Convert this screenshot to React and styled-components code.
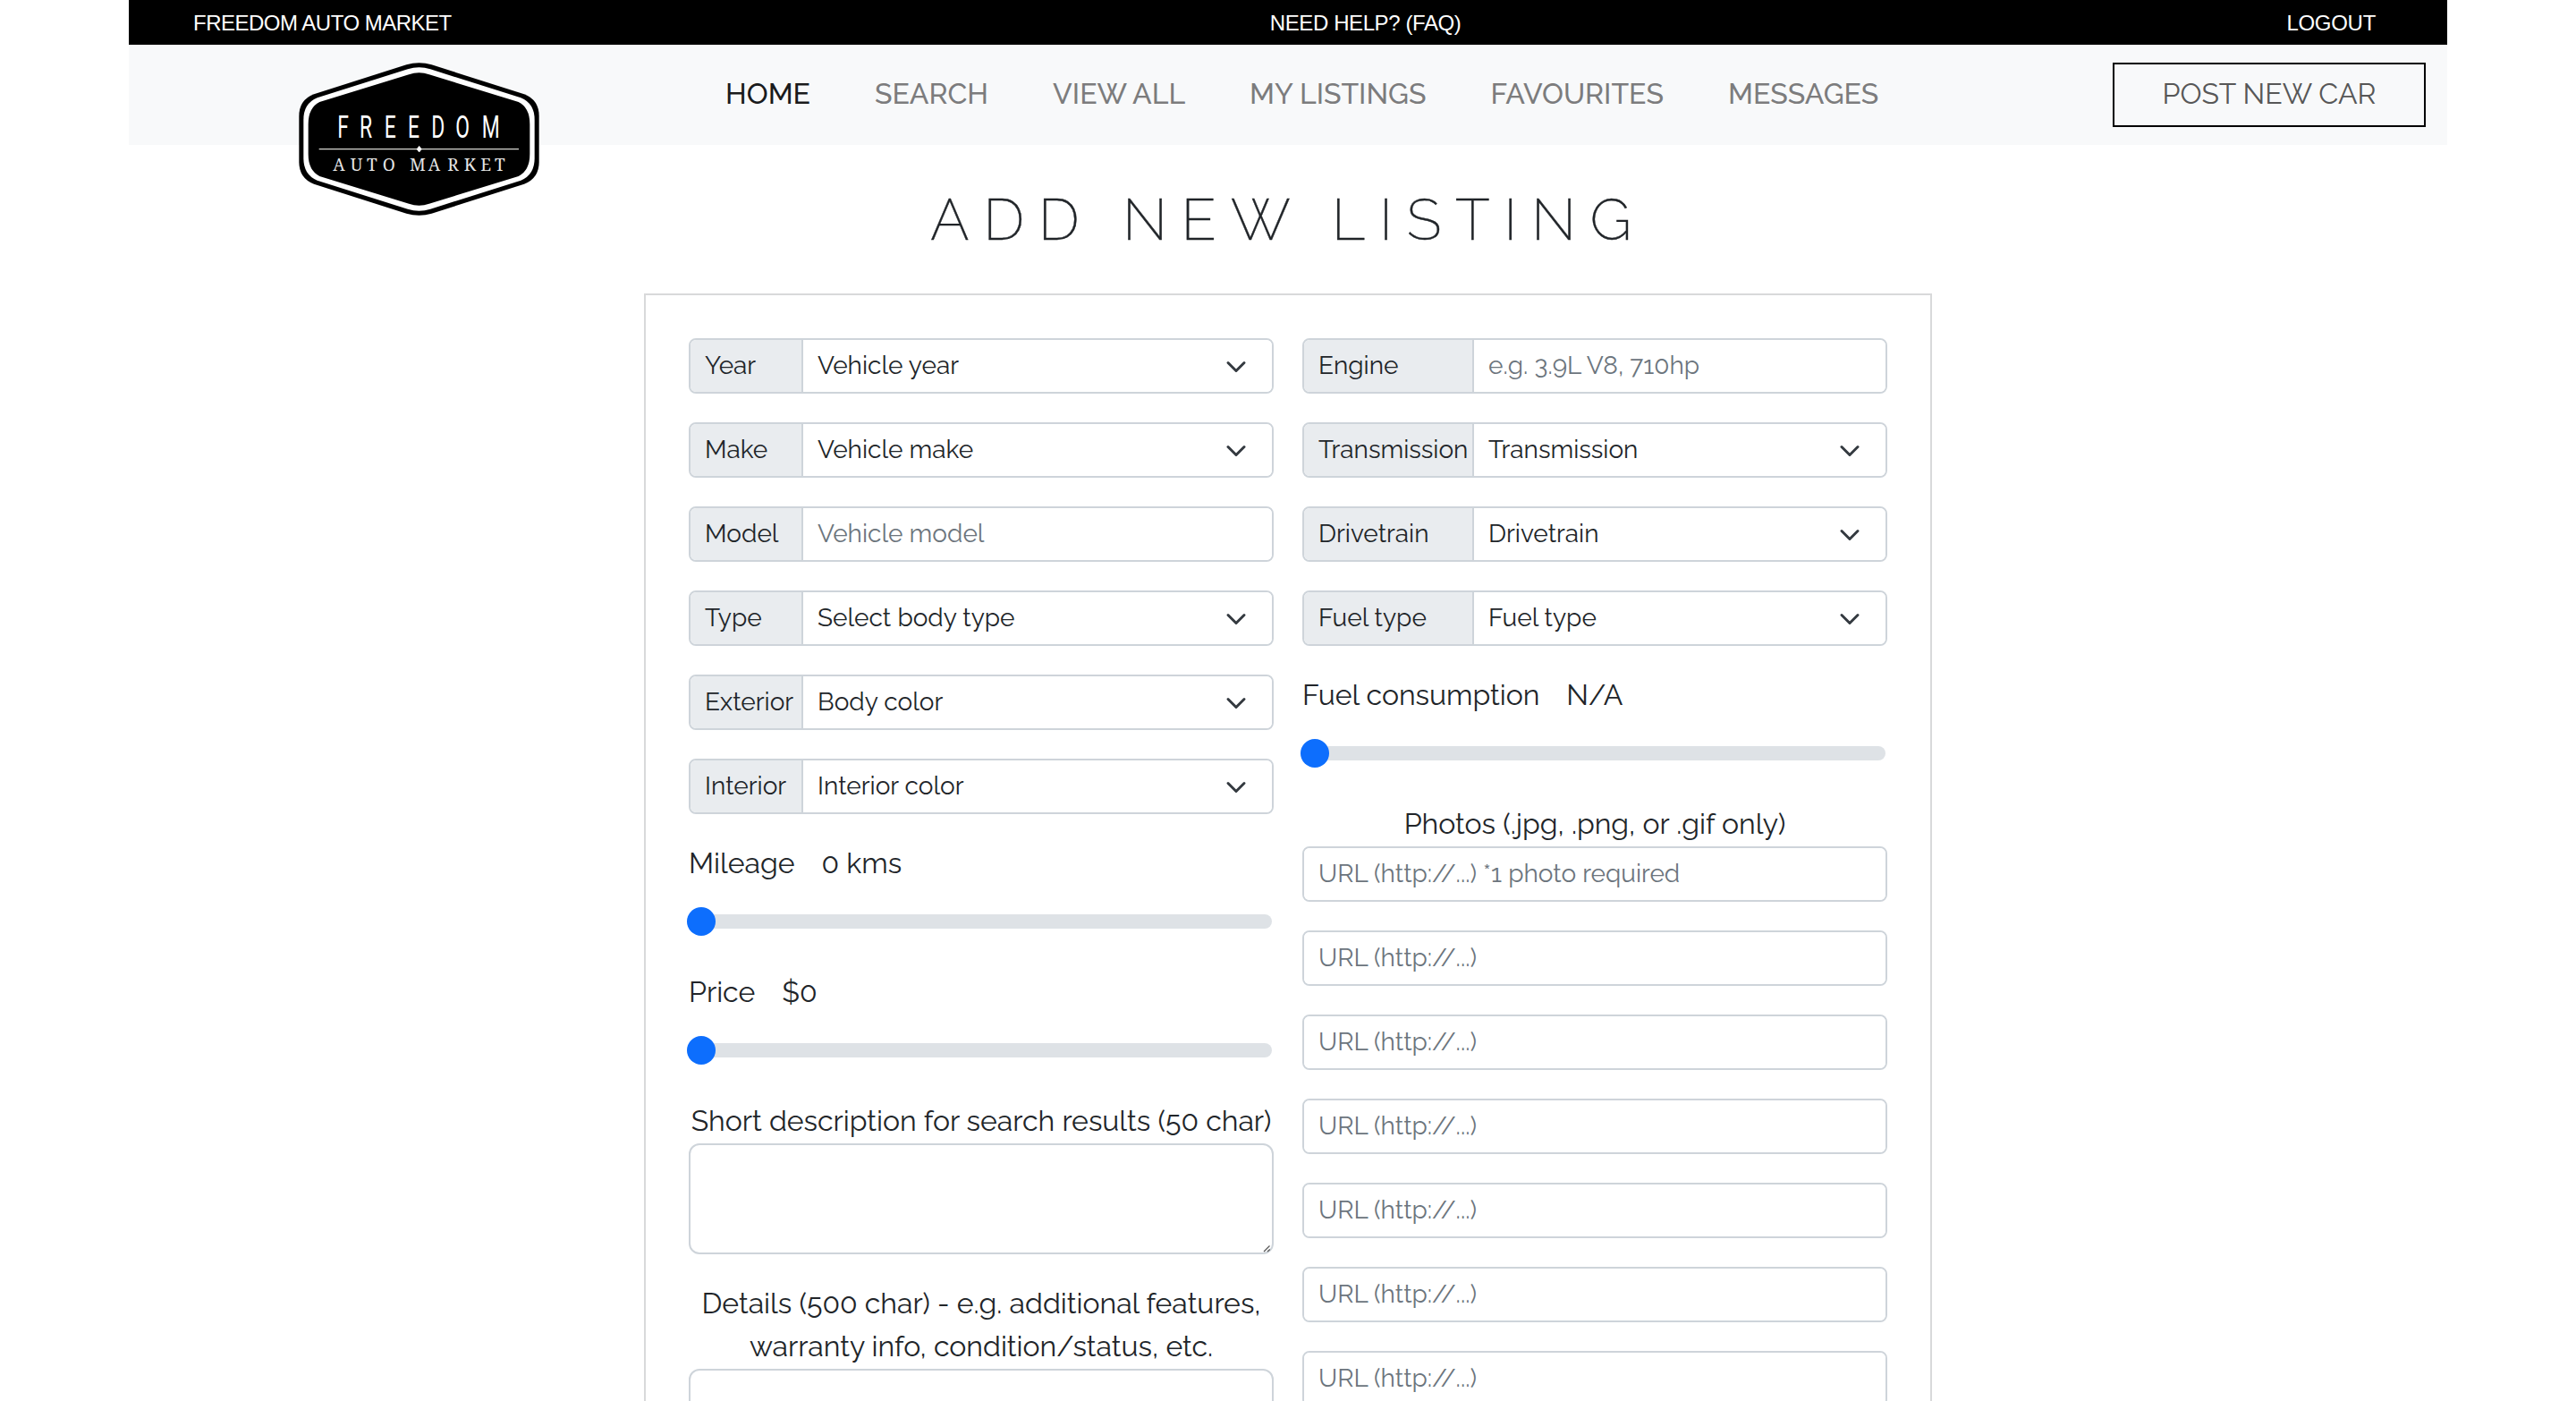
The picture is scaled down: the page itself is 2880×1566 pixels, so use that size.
import React from "react";
import styled, { createGlobalStyle } from "styled-components";

const GlobalStyle = createGlobalStyle`
  *, *::before, *::after { box-sizing: border-box; }
  html, body { margin: 0; height: 1566px; overflow: hidden; background: #fff; }
  body, input, select, textarea { font-family: Raleway, Lato, "Open Sans", sans-serif; }
  body { font-size: 32px; line-height: 48px; color: #212529; }
`;

const Page = styled.div`
  width: 2592px;
  height: 1566px;
  margin: 0 auto;
  overflow: hidden;
`;

const TopBar = styled.div`
  display: flex;
  justify-content: space-between;
  height: 50px;
  padding: 0 80px 0 72px;
  background: #000;
  color: #fff;
  font: 24px/52px "Liberation Sans", Arial, sans-serif;
`;

const TopLink = styled.a`
  letter-spacing: ${(p) => p.$spacing}px;
  margin-left: ${(p) => p.$shift || 0}px;
`;

const Nav = styled.nav`
  display: flex;
  align-items: flex-start;
  height: 112px;
  padding: 0 24px 0 186px;
  background: #f8f9fa;
`;

const Logo = styled.svg`
  flex: none;
  width: 280px;
  height: 184px;
  margin-top: 14px;
`;

const NavLinks = styled.div`
  display: flex;
  gap: 72px;
  margin: 31px 0 0 201px;
  font-weight: 500;
`;

const NavLink = styled.a`
  color: ${(p) => (p.$active ? "#1a1b1c" : "#7c7c7d")};
  white-space: nowrap;
`;

const PostButton = styled.a`
  width: 350px;
  height: 72px;
  margin: 20px 0 0 auto;
  border: 2px solid #000;
  color: #575757;
  line-height: 66px;
  text-align: center;
`;

const Title = styled.h1`
  margin: 0;
  height: 166px;
  padding-top: 45px;
  font-size: 64px;
  font-weight: 200;
  line-height: 77px;
  letter-spacing: 16px;
  text-align: center;
  -webkit-text-stroke: 0.4px #212529;
`;

const Panel = styled.form`
  display: grid;
  grid-template-columns: 654px 654px;
  gap: 32px;
  width: 1440px;
  height: 1400px;
  margin: 0 auto;
  padding: 48px;
  border: 2px solid #d8d9da;
`;

const Column = styled.div`
  display: flex;
  flex-direction: column;
`;

const Group = styled.div`
  display: flex;
  flex: none;
  height: 62px;
  margin-bottom: 32px;
  border: 2px solid #ced4da;
  border-radius: 8px;
  overflow: hidden;
  font-size: 28px;
  line-height: 42px;
`;

const Tag = styled.span`
  flex: none;
  width: ${(p) => p.$width}px;
  padding: 8px 0 0 16px;
  border-right: 2px solid #ced4da;
  background: #e9ecef;
  white-space: nowrap;
`;

const Input = styled.input`
  flex: 1;
  min-width: 0;
  padding: 8px 16px;
  border: 0;
  outline: 0;
  background: #fff;
  font-size: 28px;
  line-height: 42px;
  color: #212529;
  &::placeholder { color: #6c757d; opacity: 1; }
`;

const SelectBox = styled.div`
  display: flex;
  flex: 1;
  align-items: center;
  justify-content: space-between;
  padding: 0 24px 0 16px;
  background: #fff;
`;

const SelectText = styled.span`
  height: 42px;
`;

const Caret = styled.svg`
  width: 32px;
  height: 24px;
  margin-top: 1px;
`;

const Readout = styled.div`
  display: flex;
  gap: 30px;
  height: 48px;
  line-height: 46px;
`;

const Slider = styled.input`
  appearance: none;
  width: 654px;
  height: 48px;
  margin: 16px 0 32px -2px;
  padding: 0;
  background: transparent;
  &::-webkit-slider-runnable-track {
    height: 16px;
    border-radius: 16px;
    background: #dee2e6;
  }
  &::-webkit-slider-thumb {
    appearance: none;
    width: 32px;
    height: 32px;
    margin-top: -8px;
    border-radius: 50%;
    background: #0d6efd;
  }
`;

const Caption = styled.div`
  margin-top: -1px;
  padding-bottom: 1px;
  text-align: center;
`;

const AreaWrap = styled.div`
  position: relative;
  height: 124px;
  margin-bottom: 32px;
`;

const Area = styled.textarea`
  display: block;
  width: 100%;
  height: 124px;
  border: 2px solid #ced4da;
  border-radius: 12px;
  background: #fff;
  resize: none;
`;

const Grip = styled.svg`
  position: absolute;
  right: 3px;
  bottom: 2px;
  width: 9px;
  height: 9px;
`;

const hexagon = (x, y, shoulder, r, t) => {
  const c = 415.5;
  const R = 2 * c - x;
  const cy = 274.5;
  const m = (v) => 2 * cy - v;
  return `M${c - t} ${y + 6}Q${c} ${y - 6} ${c + t} ${y + 6}L${R - r} ${shoulder}Q${R} ${shoulder + 19} ${R} ${shoulder + 74}V${m(shoulder + 74)}Q${R} ${m(shoulder + 19)} ${R - r} ${m(shoulder)}L${c + t} ${m(y + 6)}Q${c} ${m(y - 6)} ${c - t} ${m(y + 6)}L${x + r} ${m(shoulder)}Q${x} ${m(shoulder + 19)} ${x} ${m(shoulder + 74)}V${shoulder + 74}Q${x} ${shoulder + 19} ${x + r} ${shoulder}Z`;
};

const freedomX = [148, 222, 305, 384, 463, 544, 632].map((v) => (v - 6) / 0.66).join(" ");

const BrandLogo = () => (
  <Logo viewBox="0 0 840 552">
    <path d={hexagon(13, 19, 124, 50, 42)} fill="#000" />
    <path d={hexagon(28, 34, 136, 46, 38)} fill="#fff" />
    <path d={hexagon(44, 52, 150, 38, 34)} fill="#000" />
    <text x={freedomX} y="271" transform="scale(0.66 1)" fill="#fff" fontFamily="Roboto, sans-serif" fontSize="104">
      FREEDOM
    </text>
    <path d="M80 308H750" stroke="#d8d8d2" strokeWidth="4" />
    <path d="M416 298L424 308L416 318L408 308Z" fill="#fff" stroke="#fff" strokeWidth="2" />
    <text x="127 185 240 293 350 384 446 511 566 622 669" y="382" fill="#e6e6e6" fontFamily="'Noto Serif', 'DejaVu Serif Condensed', 'DejaVu Serif', serif" fontSize="57">
      AUTO MARKET
    </text>
  </Logo>
);

const SelectField = ({ label, width, value }) => (
  <Group>
    <Tag $width={width}>{label}</Tag>
    <SelectBox>
      <SelectText>{value}</SelectText>
      <Caret viewBox="0 0 16 16">
        <path d="m2 5 6 6 6-6" fill="none" stroke="#343a40" strokeWidth="2" strokeLinecap="round" strokeLinejoin="round" />
      </Caret>
    </SelectBox>
  </Group>
);

const InputField = ({ label, width, placeholder }) => (
  <Group>
    {label && <Tag $width={width}>{label}</Tag>}
    <Input placeholder={placeholder} />
  </Group>
);

const RangeField = ({ label, value }) => (
  <>
    <Readout>
      <span>{label}</span>
      <span>{value}</span>
    </Readout>
    <Slider type="range" min="0" max="100" defaultValue="0" />
  </>
);

const AreaField = () => (
  <AreaWrap>
    <Area />
    <Grip viewBox="0 0 9 9">
      <path d="M1 8L7.5 1.5M5 8L7.8 5.5" stroke="#555" strokeWidth="1.2" />
    </Grip>
  </AreaWrap>
);

const links = ["HOME", "SEARCH", "VIEW ALL", "MY LISTINGS", "FAVOURITES", "MESSAGES"];

export default function App() {
  return (
    <Page>
      <GlobalStyle />
      <TopBar>
        <TopLink $spacing={-0.5}>FREEDOM AUTO MARKET</TopLink>
        <TopLink $spacing={-0.4} $shift={-8}>NEED HELP? (FAQ)</TopLink>
        <TopLink $spacing={-0.3}>LOGOUT</TopLink>
      </TopBar>
      <Nav>
        <BrandLogo />
        <NavLinks>
          {links.map((l, i) => (
            <NavLink key={l} $active={i === 0}>{l}</NavLink>
          ))}
        </NavLinks>
        <PostButton>POST NEW CAR</PostButton>
      </Nav>
      <Title>ADD NEW LISTING</Title>
      <Panel>
        <Column>
          <SelectField label="Year" width={126} value="Vehicle year" />
          <SelectField label="Make" width={126} value="Vehicle make" />
          <InputField label="Model" width={126} placeholder="Vehicle model" />
          <SelectField label="Type" width={126} value="Select body type" />
          <SelectField label="Exterior" width={126} value="Body color" />
          <SelectField label="Interior" width={126} value="Interior color" />
          <RangeField label="Mileage" value="0 kms" />
          <RangeField label="Price" value="$0" />
          <Caption>Short description for search results (50 char)</Caption>
          <AreaField />
          <Caption>Details (500 char) - e.g. additional features, warranty info, condition/status, etc.</Caption>
          <AreaField />
        </Column>
        <Column>
          <InputField label="Engine" width={190} placeholder="e.g. 3.9L V8, 710hp" />
          <SelectField label="Transmission" width={190} value="Transmission" />
          <SelectField label="Drivetrain" width={190} value="Drivetrain" />
          <SelectField label="Fuel type" width={190} value="Fuel type" />
          <RangeField label="Fuel consumption" value="N/A" />
          <Caption>Photos (.jpg, .png, or .gif only)</Caption>
          <InputField placeholder="URL (http://...) *1 photo required" />
          {[1, 2, 3, 4, 5, 6].map((n) => (
            <InputField key={n} placeholder="URL (http://...)" />
          ))}
        </Column>
      </Panel>
    </Page>
  );
}
